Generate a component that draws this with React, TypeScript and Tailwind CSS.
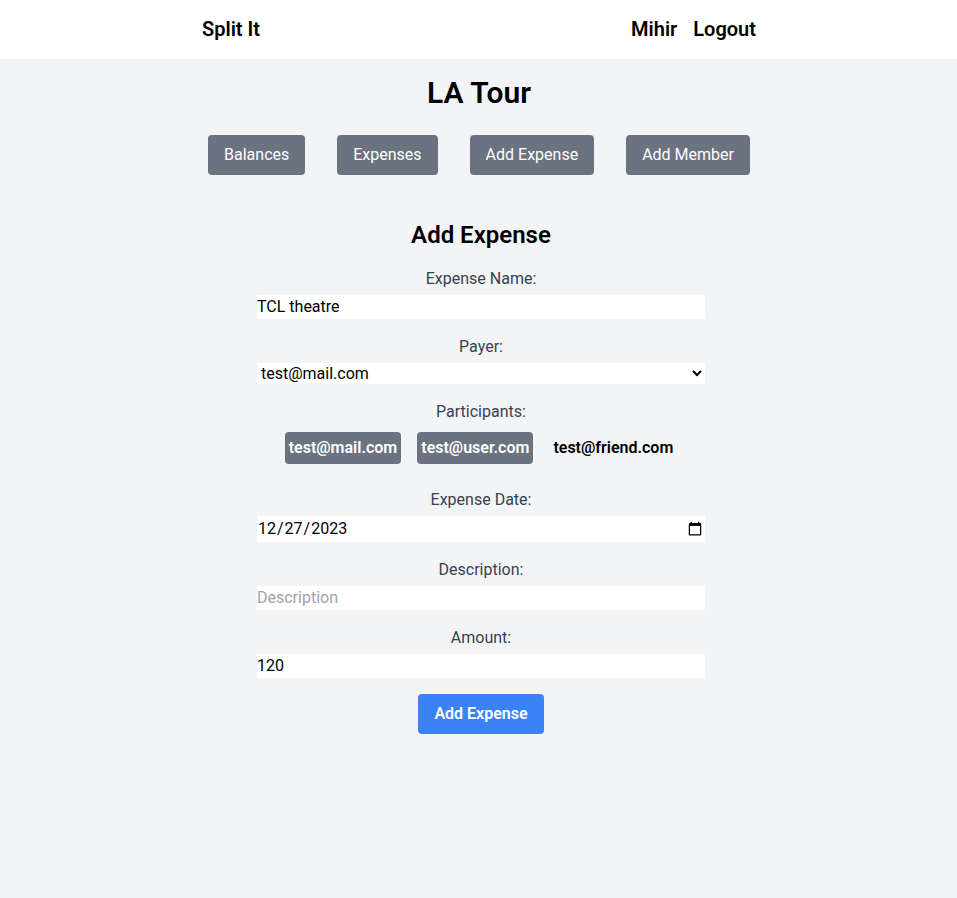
import { useState } from "react";

const members = ["test@mail.com", "test@user.com", "test@friend.com"];
const tabs = ["Balances", "Expenses", "Add Expense", "Add Member"];

export default function App() {
  const [selected, setSelected] = useState<string[]>(members.slice(0, 2));
  const toggle = (m: string) =>
    setSelected((s) => (s.includes(m) ? s.filter((x) => x !== m) : [...s, m]));

  return (
    <div className="min-h-screen bg-[#f3f4f6] font-['Roboto',sans-serif] text-base text-black">
      <header className="bg-white py-4 pl-px">
        <div className="mx-auto flex max-w-[554px] items-center justify-between text-xl font-semibold leading-[27px]">
          <a href="#home">Split It</a>
          <nav className="flex gap-4">
            <a href="#profile">Mihir</a>
            <a href="#logout">Logout</a>
          </nav>
        </div>
      </header>
      <main className="flex flex-col items-center pt-4 pl-px">
        <h1 className="text-3xl font-semibold">LA Tour</h1>
        <div className="mt-6 flex gap-8">
          {tabs.map((t) => (
            <button key={t} type="button" className="rounded bg-[#6b7280] px-4 py-2 text-white">
              {t}
            </button>
          ))}
        </div>
        <form className="mt-11 ml-1 flex w-full max-w-md flex-col text-center" onSubmit={(e) => e.preventDefault()}>
          <h2 className="mb-4 text-2xl font-semibold">Add Expense</h2>
          <div className="mb-4 flex flex-col">
            <label htmlFor="name" className="mb-1 text-[#374151]">Expense Name:</label>
            <input id="name" type="text" defaultValue="TCL theatre" className="bg-white" />
          </div>
          <div className="mb-4 flex flex-col">
            <label htmlFor="payer" className="mb-1 text-[#374151]">Payer:</label>
            <select id="payer" className="h-[21px] bg-white">
              {members.map((m) => (
                <option key={m}>{m}</option>
              ))}
            </select>
          </div>
          <div className="mb-6">
            <p className="mb-2 text-[#374151]">Participants:</p>
            <div className="flex justify-center gap-4">
              {members.map((m) => (
                <button
                  key={m}
                  type="button"
                  aria-pressed={selected.includes(m)}
                  onClick={() => toggle(m)}
                  className={`rounded p-1 font-semibold ${selected.includes(m) ? "bg-[#6b7280] text-white" : ""}`}
                >
                  {m}
                </button>
              ))}
            </div>
          </div>
          <div className="mb-4 flex flex-col">
            <label htmlFor="date" className="mb-1 text-[#374151]">Expense Date:</label>
            <input id="date" type="date" defaultValue="2023-12-27" className="h-[26px] bg-white" />
          </div>
          <div className="mb-4 flex flex-col">
            <label htmlFor="description" className="mb-1 text-[#374151]">Description:</label>
            <input id="description" type="text" placeholder="Description" className="bg-white placeholder:text-[#9ca3af]" />
          </div>
          <div className="mb-4 flex flex-col">
            <label htmlFor="amount" className="mb-1 text-[#374151]">Amount:</label>
            <input id="amount" type="number" defaultValue="120" className="bg-white" />
          </div>
          <button type="submit" className="self-center rounded bg-[#3b82f6] px-4 py-2 font-semibold text-white">
            Add Expense
          </button>
        </form>
      </main>
    </div>
  );
}
